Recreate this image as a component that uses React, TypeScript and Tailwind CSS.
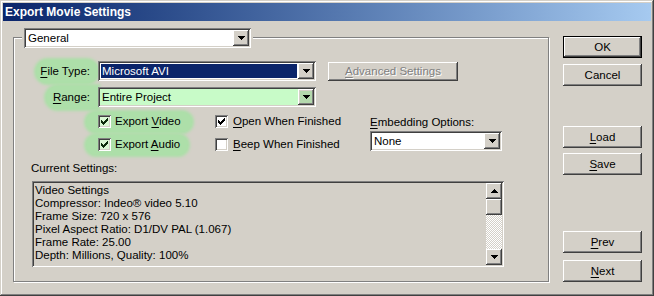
import React from "react";

const raised =
  "shadow-[inset_-1px_-1px_#404040,inset_1px_1px_#ffffff,inset_-2px_-2px_#808080,inset_2px_2px_#d4d0c8]";
const sunken =
  "shadow-[inset_1px_1px_#808080,inset_-1px_-1px_#ffffff,inset_2px_2px_#404040,inset_-2px_-2px_#d4d0c8]";
const blob = "bg-[#addfa9] shadow-[0_0_3px_2px_#addfa9]";

function Arrow({ up = false }: { up?: boolean }) {
  return (
    <svg width="7" height="4" viewBox="0 0 7 4" shapeRendering="crispEdges">
      <path
        d={
          up
            ? "M3 0h1v1H3z M2 1h3v1H2z M1 2h5v1H1z M0 3h7v1H0z"
            : "M0 0h7v1H0z M1 1h5v1H1z M2 2h3v1H2z M3 3h1v1H3z"
        }
        fill="#000"
      />
    </svg>
  );
}

function Check({ color = "#000" }: { color?: string }) {
  return (
    <svg width="7" height="7" viewBox="0 0 7 7" shapeRendering="crispEdges">
      <path
        d="M6 0h1v1H6z M5 1h2v1H5z M0 2h1v1H0z M4 2h3v1H4z M0 3h2v1H0z M3 3h3v1H3z M0 4h5v1H0z M1 5h3v1H1z M2 6h1v1H2z"
        fill={color}
      />
    </svg>
  );
}

function Combo({
  children,
  className = "",
  fieldClass = "bg-white",
  btnClass = "bg-[#d4d0c8]",
}: {
  children: React.ReactNode;
  className?: string;
  fieldClass?: string;
  btnClass?: string;
}) {
  return (
    <div className={`flex p-[2px] ${sunken} ${className}`}>
      <div className={`flex-1 flex items-center ${fieldClass}`}>{children}</div>
      <div className={`w-[16px] flex items-center justify-center ${raised} ${btnClass}`}>
        <Arrow />
      </div>
    </div>
  );
}

function Box({ checked, green = false }: { checked: boolean; green?: boolean }) {
  return (
    <div
      className={`w-[13px] h-[13px] flex items-center justify-center ${sunken} ${
        green ? "bg-[#d9f7d4]" : "bg-white"
      }`}
    >
      {checked && <Check color={green ? "#0b2a0b" : "#000"} />}
    </div>
  );
}

function Btn({ children, className = "" }: { children: React.ReactNode; className?: string }) {
  return (
    <div className={`w-[79px] h-[22px] flex items-center justify-center bg-[#d4d0c8] ${raised} ${className}`}>
      {children}
    </div>
  );
}

const u = "underline decoration-1 underline-offset-[2px]";

export default function App() {
  return (
    <div className="w-[654px] h-[296px] bg-[#d4d0c8] p-[3px] flex flex-col text-black text-[11.5px] leading-[13px] font-['Liberation_Sans',Arial,sans-serif] shadow-[inset_-1px_-1px_#404040,inset_1px_1px_#d4d0c8,inset_-2px_-2px_#808080,inset_2px_2px_#ffffff]">
      {/* title bar */}
      <div className="h-[18px] flex items-center pl-[2px] bg-gradient-to-r from-[#0a246a] to-[#a6caf0] text-white font-bold text-[12px]">
        Export Movie Settings
      </div>

      <div className="flex">
        {/* left: settings group */}
        <div className="ml-[10px] mt-[7px] w-[536px] flex flex-col">
          <div className="ml-[9px] px-[2px] bg-[#d4d0c8] w-[231px] relative z-10">
            <Combo className="w-[227px] h-[20px]">
              <span className="pl-[2px]">General</span>
            </Combo>
          </div>

          <div className="-mt-[11px] h-[245px] border border-[#808080] shadow-[inset_1px_1px_#ffffff,1px_1px_#ffffff] flex flex-col">
            {/* File Type */}
            <div className="mt-[23px] h-[20px] flex items-center">
              <div className="w-[84px] flex justify-end">
                <div className={`-my-[2px] w-[62px] h-[23px] rounded-full flex items-center justify-end pr-[8px] ${blob}`}>
                  <span>
                    <span className={u}>F</span>ile Type:
                  </span>
                </div>
              </div>
              <Combo className="w-[218px] h-[20px]">
                <div className="self-stretch flex-1 m-[1px] bg-[#0a246a] text-white flex items-center pl-[1px]">
                  Microsoft AVI
                </div>
              </Combo>
              <div className={`ml-[12px] w-[130px] h-[19px] flex items-center justify-center text-[#808080] [text-shadow:1px_1px_0_#ffffff] ${raised}`}>
                <span>
                  <span className={u}>A</span>dvanced Settings
                </span>
              </div>
            </div>

            {/* Range */}
            <div className="mt-[6px] h-[20px] flex items-center">
              <div className="w-[84px] flex justify-end">
                <div className={`-my-[2px] w-[52px] h-[23px] rounded-l-full flex items-center justify-end pr-[8px] ${blob}`}>
                  <span>
                    <span className={u}>R</span>ange:
                  </span>
                </div>
              </div>
              <Combo
                className="w-[218px] h-[20px] shadow-[0_0_2px_1px_#addfa9]"
                fieldClass="bg-[#c8fbc8]"
                btnClass="bg-[#b4d9ad]"
              >
                <span className="pl-[2px]">Entire Project</span>
              </Combo>
            </div>

            {/* checkboxes + embedding */}
            <div className="mt-[3px] flex">
              <div className="ml-[84px] w-[117px] flex flex-col">
                <div className="h-[23px] flex items-center">
                  <div className={`-ml-[12px] pl-[12px] pr-[11px] h-[20px] rounded-full flex items-center gap-[4px] ${blob}`}>
                    <Box checked green />
                    <span>
                      Export <span className={u}>V</span>ideo
                    </span>
                  </div>
                </div>
                <div className="h-[23px] flex items-center">
                  <div className={`-ml-[12px] pl-[12px] pr-[8px] h-[20px] rounded-full flex items-center gap-[4px] ${blob}`}>
                    <Box checked green />
                    <span>
                      Export <span className={u}>A</span>udio
                    </span>
                  </div>
                </div>
              </div>
              <div className="w-[155px] flex flex-col">
                <div className="h-[23px] flex items-center gap-[5px]">
                  <Box checked />
                  <span>
                    <span className={u}>O</span>pen When Finished
                  </span>
                </div>
                <div className="h-[23px] flex items-center gap-[5px]">
                  <Box checked={false} />
                  <span>
                    <span className={u}>B</span>eep When Finished
                  </span>
                </div>
              </div>
              <div className="flex flex-col">
                <div className="mt-[5px] h-[14px] flex items-center">
                  <span>
                    <span className={u}>E</span>mbedding Options:
                  </span>
                </div>
                <Combo className="mt-[2px] w-[132px] h-[20px]">
                  <span className="pl-[2px]">None</span>
                </Combo>
              </div>
            </div>

            {/* current settings */}
            <div className="mt-[5px] ml-[17px] h-[14px] flex items-center">Current Settings:</div>
            <div className={`mt-[6px] ml-[18px] w-[472px] h-[86px] p-[2px] flex bg-[#d4d0c8] ${sunken}`}>
              <div className="flex-1 pl-[1px] pt-[1px] leading-[13px]">
                <div>Video Settings</div>
                <div>Compressor: Indeo® video 5.10</div>
                <div>Frame Size: 720 x 576</div>
                <div>Pixel Aspect Ratio: D1/DV PAL (1.067)</div>
                <div>Frame Rate: 25.00</div>
                <div>Depth: Millions, Quality: 100%</div>
              </div>
              <div className="w-[16px] flex flex-col">
                <div className={`h-[16px] flex items-center justify-center ${raised}`}>
                  <Arrow up />
                </div>
                <div className={`h-[16px] ${raised}`} />
                <div className="flex-1 bg-[repeating-conic-gradient(#ffffff_0%_25%,#d4d0c8_0%_50%)] bg-[length:2px_2px]" />
                <div className={`h-[16px] flex items-center justify-center ${raised}`}>
                  <Arrow />
                </div>
              </div>
            </div>
          </div>
        </div>

        {/* right: buttons */}
        <div className="ml-[14px] flex flex-col">
          <Btn className="mt-[15px] border border-black">OK</Btn>
          <Btn className="mt-[6px]">Cancel</Btn>
          <Btn className="mt-[40px]">
            <span>
              <span className={u}>L</span>oad
            </span>
          </Btn>
          <Btn className="mt-[5px]">
            <span>
              <span className={u}>S</span>ave
            </span>
          </Btn>
          <Btn className="mt-[56px]">
            <span>
              <span className={u}>P</span>rev
            </span>
          </Btn>
          <Btn className="mt-[7px]">
            <span>
              <span className={u}>N</span>ext
            </span>
          </Btn>
        </div>
      </div>
    </div>
  );
}
